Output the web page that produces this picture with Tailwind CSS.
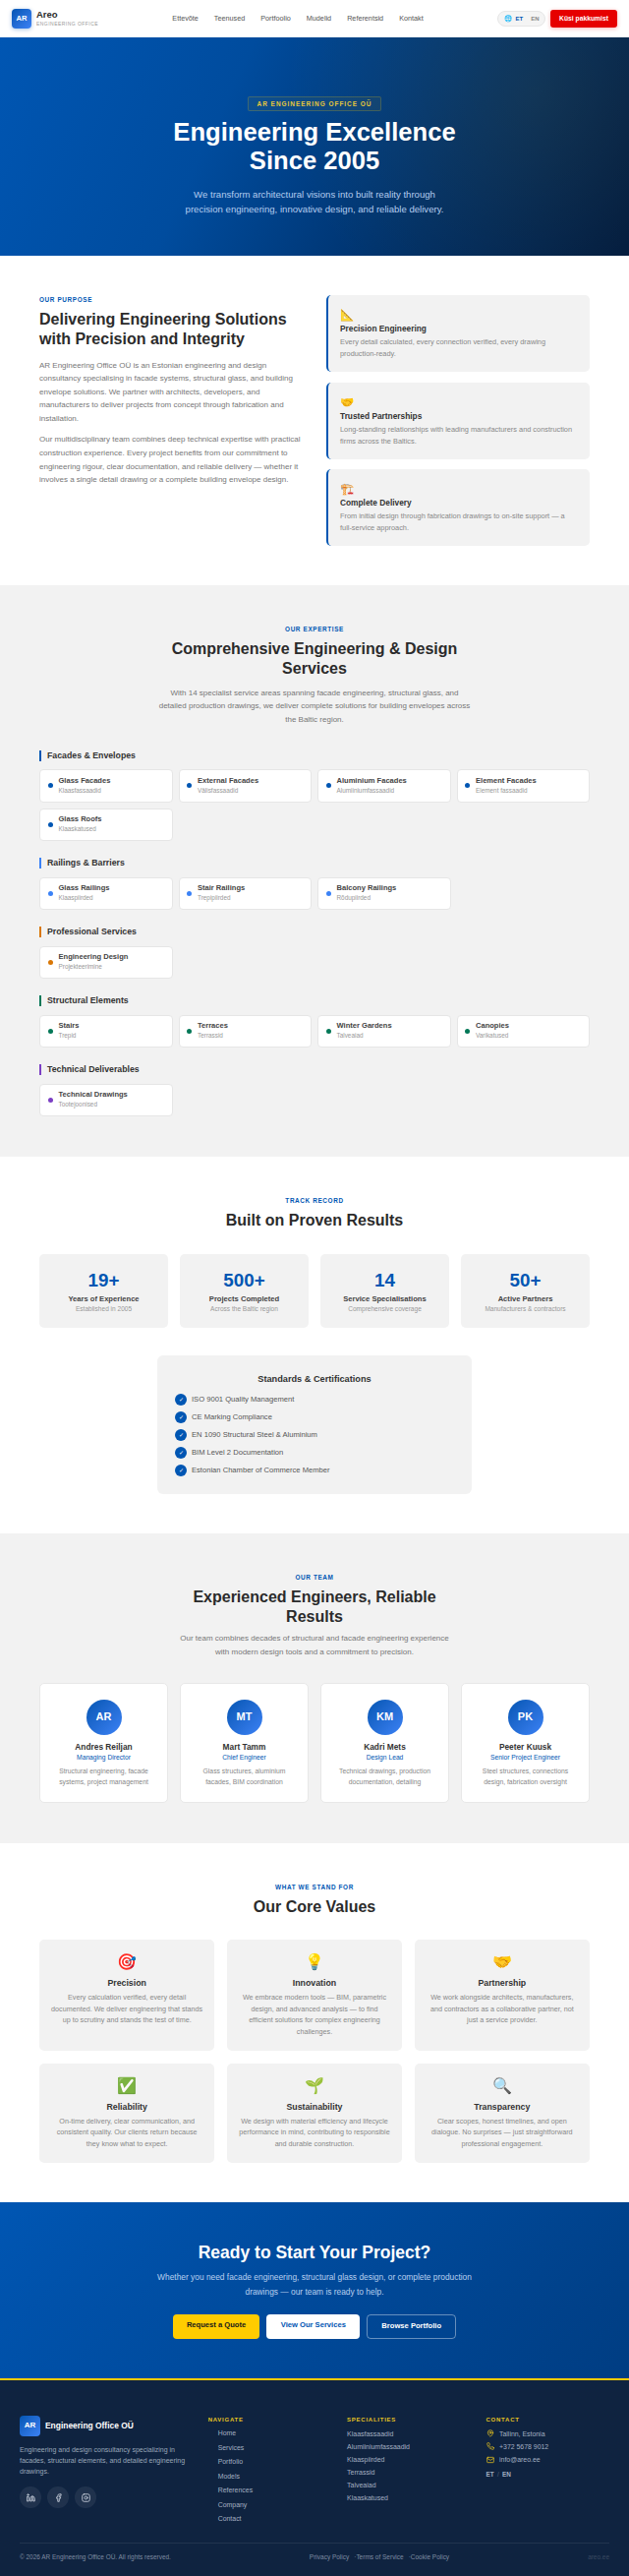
<!DOCTYPE html>
<html lang="en">
<head>
    <meta charset="UTF-8">
    <meta name="viewport" content="width=device-width, initial-scale=1.0">
    <title>AR Engineering Office OÜ</title>
    <script src="https://cdn.jsdelivr.net/npm/@tailwindcss/browser@4"></script>
</head>
<body class="font-['Liberation_Sans',sans-serif] bg-white text-[#2b2b2b] w-[640px]">

    <!-- Navbar -->
    <nav class="h-[38px] px-[12px] flex items-center justify-between bg-white">
        <div class="flex items-center gap-[5px]">
            <div class="w-[20px] h-[20px] rounded-[4px] bg-gradient-to-br from-[#0056b3] to-[#3b82f6] text-white text-[7.6px] font-bold flex items-center justify-center shadow-[0_1px_4px_rgba(0,86,179,.35)]">AR</div>
            <div>
                <p class="text-[9.5px] leading-[10px] font-semibold text-[#2b2b2b]">Areo</p>
                <p class="text-[5px] leading-[8px] tracking-[.46px] text-[#999]">ENGINEERING OFFICE</p>
            </div>
        </div>
        <div class="flex items-center gap-[16px] text-[7.24px] leading-[10px] text-[#555]">
            <a>Ettevõte</a>
            <a>Teenused</a>
            <a>Portfoolio</a>
            <a>Mudelid</a>
            <a>Referentsid</a>
            <a>Kontakt</a>
        </div>
        <div class="flex items-center gap-[5px]">
            <div class="w-[49px] h-[16px] rounded-full bg-[#f4f4f4] border border-[#e6e6e6] flex items-center pl-[6px] text-[6px] font-bold">
                <span class="text-[6.6px] leading-none">🌐</span>
                <span class="ml-[3.5px] text-[#0056b3]">ET</span>
                <span class="ml-[8px] text-[#888]">EN</span>
            </div>
            <a class="w-[68px] h-[17.5px] rounded-[3px] bg-[#e60000] text-white text-[6.74px] font-bold flex items-center justify-center shadow-[0_1px_4px_rgba(230,0,0,.3)]">Küsi pakkumist</a>
        </div>
    </nav>

    <!-- Hero -->
    <section class="h-[222px] pt-[60px] text-center bg-[radial-gradient(circle_at_85%_25%,rgba(255,204,0,.07),transparent_45%),linear-gradient(115deg,#0056b3_0%,#004c9e_35%,#002f66_70%,#001a3f_100%)]">
        <span class="block mx-auto h-[15px] w-[136px] leading-[13px] border border-[#ffcc00]/20 rounded-[2px] bg-[#ffcc00]/5 text-[#e6c73c] text-[6.44px] font-bold tracking-[1px]">AR ENGINEERING OFFICE OÜ</span>
        <h1 class="mt-[6.5px] text-[25.6px] leading-[29px] font-bold text-white">Engineering Excellence<br>Since 2005</h1>
        <p class="mt-[12px] text-[9.58px] leading-[15px] text-[#b5cdf0]">We transform architectural visions into built reality through<br>precision engineering, innovative design, and reliable delivery.</p>
    </section>

    <!-- Purpose -->
    <section class="h-[335px] px-[40px] pt-[40px] grid grid-cols-2 gap-[24px] items-start">
        <div>
            <p class="text-[6.4px] leading-[10px] font-bold tracking-[.62px] text-[#0056b3]">OUR PURPOSE</p>
            <h2 class="mt-[4.5px] text-[16px] leading-[20px] font-bold text-[#2b2b2b]">Delivering Engineering Solutions with Precision and Integrity</h2>
            <p class="mt-[10px] text-[8px] leading-[13.6px] text-[#777]">AR Engineering Office OÜ is an Estonian engineering and design consultancy specialising in facade systems, structural glass, and building envelope solutions. We partner with architects, developers, and manufacturers to deliver projects from concept through fabrication and installation.</p>
            <p class="mt-[8px] text-[8px] leading-[13.6px] text-[#777]">Our multidisciplinary team combines deep technical expertise with practical construction experience. Every project benefits from our commitment to engineering rigour, clear documentation, and reliable delivery — whether it involves a single detail drawing or a complete building envelope design.</p>
        </div>
        <div class="flex flex-col gap-[10.5px]">
            <div class="h-[78px] px-[12px] pt-[12px] bg-[#f2f2f2] border-l-2 border-[#0056b3] rounded-[5px]">
                <div class="text-[11.5px] leading-[16px]">📐</div>
                <h3 class="text-[8.33px] leading-[12px] font-bold text-[#333]">Precision Engineering</h3>
                <p class="mt-[2px] text-[7.36px] leading-[12px] text-[#888]">Every detail calculated, every connection verified, every drawing production-ready.</p>
            </div>
            <div class="h-[78px] px-[12px] pt-[12px] bg-[#f2f2f2] border-l-2 border-[#0056b3] rounded-[5px]">
                <div class="text-[11.5px] leading-[16px]">🤝</div>
                <h3 class="text-[8.33px] leading-[12px] font-bold text-[#333]">Trusted Partnerships</h3>
                <p class="mt-[2px] text-[7.36px] leading-[12px] text-[#888]">Long-standing relationships with leading manufacturers and construction firms across the Baltics.</p>
            </div>
            <div class="h-[78px] px-[12px] pt-[12px] bg-[#f2f2f2] border-l-2 border-[#0056b3] rounded-[5px]">
                <div class="text-[11.5px] leading-[16px]">🏗️</div>
                <h3 class="text-[8.33px] leading-[12px] font-bold text-[#333]">Complete Delivery</h3>
                <p class="mt-[2px] text-[7.36px] leading-[12px] text-[#888]">From initial design through fabrication drawings to on-site support — a full-service approach.</p>
            </div>
        </div>
    </section>

    <!-- Services -->
    <section class="h-[581px] px-[40px] pt-[40px] bg-[#f2f2f2]">
        <p class="text-center text-[6.4px] leading-[10px] font-bold tracking-[.62px] text-[#0056b3]">OUR EXPERTISE</p>
        <h2 class="mt-[5px] mx-auto w-[320px] text-center text-[16px] leading-[20px] font-bold text-[#2b2b2b]">Comprehensive Engineering &amp; Design Services</h2>
        <p class="mt-[7.5px] mx-auto w-[320px] text-center text-[8px] leading-[13.7px] text-[#777]">With 14 specialist service areas spanning facade engineering, structural glass, and detailed production drawings, we deliver complete solutions for building envelopes across the Baltic region.</p>

        <h3 class="mt-[24px] h-[11px] flex items-center border-l-2 border-[#0056b3] pl-[6px] text-[8.75px] font-semibold text-[#333]">Facades &amp; Envelopes</h3>
        <div class="mt-[8.5px] grid grid-cols-4 gap-[6px]">
            <div class="h-[33.5px] flex items-center gap-[6px] pl-[7.5px] bg-white border border-[#e6e6e6] rounded-[4px]">
                <span class="w-[5px] h-[5px] rounded-full bg-[#0056b3]"></span>
                <div><p class="text-[7.56px] leading-[10px] font-bold text-[#444]">Glass Facades</p><p class="text-[6.4px] leading-[10px] text-[#999]">Klaasfassaadid</p></div>
            </div>
            <div class="h-[33.5px] flex items-center gap-[6px] pl-[7.5px] bg-white border border-[#e6e6e6] rounded-[4px]">
                <span class="w-[5px] h-[5px] rounded-full bg-[#0056b3]"></span>
                <div><p class="text-[7.56px] leading-[10px] font-bold text-[#444]">External Facades</p><p class="text-[6.4px] leading-[10px] text-[#999]">Välisfassaadid</p></div>
            </div>
            <div class="h-[33.5px] flex items-center gap-[6px] pl-[7.5px] bg-white border border-[#e6e6e6] rounded-[4px]">
                <span class="w-[5px] h-[5px] rounded-full bg-[#0056b3]"></span>
                <div><p class="text-[7.56px] leading-[10px] font-bold text-[#444]">Aluminium Facades</p><p class="text-[6.4px] leading-[10px] text-[#999]">Alumiiniumfassaadid</p></div>
            </div>
            <div class="h-[33.5px] flex items-center gap-[6px] pl-[7.5px] bg-white border border-[#e6e6e6] rounded-[4px]">
                <span class="w-[5px] h-[5px] rounded-full bg-[#0056b3]"></span>
                <div><p class="text-[7.56px] leading-[10px] font-bold text-[#444]">Element Facades</p><p class="text-[6.4px] leading-[10px] text-[#999]">Element fassaadid</p></div>
            </div>
            <div class="h-[33.5px] flex items-center gap-[6px] pl-[7.5px] bg-white border border-[#e6e6e6] rounded-[4px]">
                <span class="w-[5px] h-[5px] rounded-full bg-[#0056b3]"></span>
                <div><p class="text-[7.56px] leading-[10px] font-bold text-[#444]">Glass Roofs</p><p class="text-[6.4px] leading-[10px] text-[#999]">Klaaskatused</p></div>
            </div>
        </div>

        <h3 class="mt-[17px] h-[11px] flex items-center border-l-2 border-[#3b82f6] pl-[6px] text-[8.75px] font-semibold text-[#333]">Railings &amp; Barriers</h3>
        <div class="mt-[8.5px] grid grid-cols-4 gap-[6px]">
            <div class="h-[33.5px] flex items-center gap-[6px] pl-[7.5px] bg-white border border-[#e6e6e6] rounded-[4px]">
                <span class="w-[5px] h-[5px] rounded-full bg-[#3b82f6]"></span>
                <div><p class="text-[7.56px] leading-[10px] font-bold text-[#444]">Glass Railings</p><p class="text-[6.4px] leading-[10px] text-[#999]">Klaaspiirded</p></div>
            </div>
            <div class="h-[33.5px] flex items-center gap-[6px] pl-[7.5px] bg-white border border-[#e6e6e6] rounded-[4px]">
                <span class="w-[5px] h-[5px] rounded-full bg-[#3b82f6]"></span>
                <div><p class="text-[7.56px] leading-[10px] font-bold text-[#444]">Stair Railings</p><p class="text-[6.4px] leading-[10px] text-[#999]">Trepipiirded</p></div>
            </div>
            <div class="h-[33.5px] flex items-center gap-[6px] pl-[7.5px] bg-white border border-[#e6e6e6] rounded-[4px]">
                <span class="w-[5px] h-[5px] rounded-full bg-[#3b82f6]"></span>
                <div><p class="text-[7.56px] leading-[10px] font-bold text-[#444]">Balcony Railings</p><p class="text-[6.4px] leading-[10px] text-[#999]">Rõdupiirded</p></div>
            </div>
        </div>

        <h3 class="mt-[17px] h-[11px] flex items-center border-l-2 border-[#d97706] pl-[6px] text-[8.75px] font-semibold text-[#333]">Professional Services</h3>
        <div class="mt-[8.5px] grid grid-cols-4 gap-[6px]">
            <div class="h-[33.5px] flex items-center gap-[6px] pl-[7.5px] bg-white border border-[#e6e6e6] rounded-[4px]">
                <span class="w-[5px] h-[5px] rounded-full bg-[#d97706]"></span>
                <div><p class="text-[7.56px] leading-[10px] font-bold text-[#444]">Engineering Design</p><p class="text-[6.4px] leading-[10px] text-[#999]">Projekteerimine</p></div>
            </div>
        </div>

        <h3 class="mt-[17px] h-[11px] flex items-center border-l-2 border-[#047857] pl-[6px] text-[8.75px] font-semibold text-[#333]">Structural Elements</h3>
        <div class="mt-[8.5px] grid grid-cols-4 gap-[6px]">
            <div class="h-[33.5px] flex items-center gap-[6px] pl-[7.5px] bg-white border border-[#e6e6e6] rounded-[4px]">
                <span class="w-[5px] h-[5px] rounded-full bg-[#047857]"></span>
                <div><p class="text-[7.56px] leading-[10px] font-bold text-[#444]">Stairs</p><p class="text-[6.4px] leading-[10px] text-[#999]">Trepid</p></div>
            </div>
            <div class="h-[33.5px] flex items-center gap-[6px] pl-[7.5px] bg-white border border-[#e6e6e6] rounded-[4px]">
                <span class="w-[5px] h-[5px] rounded-full bg-[#047857]"></span>
                <div><p class="text-[7.56px] leading-[10px] font-bold text-[#444]">Terraces</p><p class="text-[6.4px] leading-[10px] text-[#999]">Terrassid</p></div>
            </div>
            <div class="h-[33.5px] flex items-center gap-[6px] pl-[7.5px] bg-white border border-[#e6e6e6] rounded-[4px]">
                <span class="w-[5px] h-[5px] rounded-full bg-[#047857]"></span>
                <div><p class="text-[7.56px] leading-[10px] font-bold text-[#444]">Winter Gardens</p><p class="text-[6.4px] leading-[10px] text-[#999]">Talveaiad</p></div>
            </div>
            <div class="h-[33.5px] flex items-center gap-[6px] pl-[7.5px] bg-white border border-[#e6e6e6] rounded-[4px]">
                <span class="w-[5px] h-[5px] rounded-full bg-[#047857]"></span>
                <div><p class="text-[7.56px] leading-[10px] font-bold text-[#444]">Canopies</p><p class="text-[6.4px] leading-[10px] text-[#999]">Varikatused</p></div>
            </div>
        </div>

        <h3 class="mt-[17px] h-[11px] flex items-center border-l-2 border-[#7c3fc4] pl-[6px] text-[8.75px] font-semibold text-[#333]">Technical Deliverables</h3>
        <div class="mt-[8.5px] grid grid-cols-4 gap-[6px]">
            <div class="h-[33.5px] flex items-center gap-[6px] pl-[7.5px] bg-white border border-[#e6e6e6] rounded-[4px]">
                <span class="w-[5px] h-[5px] rounded-full bg-[#7c3fc4]"></span>
                <div><p class="text-[7.56px] leading-[10px] font-bold text-[#444]">Technical Drawings</p><p class="text-[6.4px] leading-[10px] text-[#999]">Tootejoonised</p></div>
            </div>
        </div>
    </section>

    <!-- Track record -->
    <section class="h-[383px] px-[40px] pt-[40px]">
        <p class="text-center text-[6.4px] leading-[10px] font-bold tracking-[.62px] text-[#0056b3]">TRACK RECORD</p>
        <h2 class="mt-[5px] text-center text-[16px] leading-[20px] font-bold text-[#2b2b2b]">Built on Proven Results</h2>
        <div class="mt-[24px] grid grid-cols-4 gap-[12px] text-center">
            <div class="h-[75px] pt-[14.5px] bg-[#f2f2f2] rounded-[5px]">
                <p class="text-[18.8px] leading-[23px] font-bold text-[#0056b3]">19+</p>
                <p class="mt-[3px] text-[7.6px] leading-[10px] font-bold text-[#444]">Years of Experience</p>
                <p class="text-[6.56px] leading-[10px] text-[#999]">Established in 2005</p>
            </div>
            <div class="h-[75px] pt-[14.5px] bg-[#f2f2f2] rounded-[5px]">
                <p class="text-[18.8px] leading-[23px] font-bold text-[#0056b3]">500+</p>
                <p class="mt-[3px] text-[7.6px] leading-[10px] font-bold text-[#444]">Projects Completed</p>
                <p class="text-[6.56px] leading-[10px] text-[#999]">Across the Baltic region</p>
            </div>
            <div class="h-[75px] pt-[14.5px] bg-[#f2f2f2] rounded-[5px]">
                <p class="text-[18.8px] leading-[23px] font-bold text-[#0056b3]">14</p>
                <p class="mt-[3px] text-[7.6px] leading-[10px] font-bold text-[#444]">Service Specialisations</p>
                <p class="text-[6.56px] leading-[10px] text-[#999]">Comprehensive coverage</p>
            </div>
            <div class="h-[75px] pt-[14.5px] bg-[#f2f2f2] rounded-[5px]">
                <p class="text-[18.8px] leading-[23px] font-bold text-[#0056b3]">50+</p>
                <p class="mt-[3px] text-[7.6px] leading-[10px] font-bold text-[#444]">Active Partners</p>
                <p class="text-[6.56px] leading-[10px] text-[#999]">Manufacturers &amp; contractors</p>
            </div>
        </div>
        <div class="mt-[27.5px] mx-auto w-[320px] h-[141.5px] px-[18px] pt-[18px] bg-[#f2f2f2] rounded-[6px]">
            <h3 class="text-center text-[9.2px] leading-[12px] font-bold text-[#333]">Standards &amp; Certifications</h3>
            <ul class="mt-[9.5px] flex flex-col gap-[6px] text-[7.6px] leading-[12px] text-[#555]">
                <li class="flex items-center gap-[5px]"><span class="w-[12px] h-[12px] rounded-full bg-[#0056b3] text-white text-[5.5px] flex items-center justify-center">✓</span>ISO 9001 Quality Management</li>
                <li class="flex items-center gap-[5px]"><span class="w-[12px] h-[12px] rounded-full bg-[#0056b3] text-white text-[5.5px] flex items-center justify-center">✓</span>CE Marking Compliance</li>
                <li class="flex items-center gap-[5px]"><span class="w-[12px] h-[12px] rounded-full bg-[#0056b3] text-white text-[5.5px] flex items-center justify-center">✓</span>EN 1090 Structural Steel &amp; Aluminium</li>
                <li class="flex items-center gap-[5px]"><span class="w-[12px] h-[12px] rounded-full bg-[#0056b3] text-white text-[5.5px] flex items-center justify-center">✓</span>BIM Level 2 Documentation</li>
                <li class="flex items-center gap-[5px]"><span class="w-[12px] h-[12px] rounded-full bg-[#0056b3] text-white text-[5.5px] flex items-center justify-center">✓</span>Estonian Chamber of Commerce Member</li>
            </ul>
        </div>
    </section>

    <!-- Team -->
    <section class="h-[314.5px] px-[40px] pt-[40px] bg-[#f2f2f2]">
        <p class="text-center text-[6.4px] leading-[10px] font-bold tracking-[.62px] text-[#0056b3]">OUR TEAM</p>
        <h2 class="mt-[4.7px] text-center text-[16px] leading-[20px] font-bold text-[#2b2b2b]">Experienced Engineers, Reliable<br>Results</h2>
        <p class="mt-[5.7px] text-center text-[8px] leading-[13.6px] text-[#777]">Our team combines decades of structural and facade engineering experience<br>with modern design tools and a commitment to precision.</p>
        <div class="mt-[24px] grid grid-cols-4 gap-[12px] text-center">
            <div class="h-[122px] pt-[16px] bg-white border border-[#e8e8e8] rounded-[5px]">
                <div class="mx-auto w-[36px] h-[36px] rounded-full bg-gradient-to-br from-[#0056b3] to-[#3b82f6] text-white text-[11px] font-bold flex items-center justify-center">AR</div>
                <p class="mt-[6.5px] text-[8.34px] leading-[12px] font-semibold text-[#333]">Andres Reiljan</p>
                <p class="text-[6.72px] leading-[10px] text-[#0056b3]">Managing Director</p>
                <p class="mt-[4px] text-[6.8px] leading-[10.7px] text-[#888]">Structural engineering, facade<br>systems, project management</p>
            </div>
            <div class="h-[122px] pt-[16px] bg-white border border-[#e8e8e8] rounded-[5px]">
                <div class="mx-auto w-[36px] h-[36px] rounded-full bg-gradient-to-br from-[#0056b3] to-[#3b82f6] text-white text-[11px] font-bold flex items-center justify-center">MT</div>
                <p class="mt-[6.5px] text-[8.34px] leading-[12px] font-semibold text-[#333]">Mart Tamm</p>
                <p class="text-[6.72px] leading-[10px] text-[#0056b3]">Chief Engineer</p>
                <p class="mt-[4px] text-[6.8px] leading-[10.7px] text-[#888]">Glass structures, aluminium<br>facades, BIM coordination</p>
            </div>
            <div class="h-[122px] pt-[16px] bg-white border border-[#e8e8e8] rounded-[5px]">
                <div class="mx-auto w-[36px] h-[36px] rounded-full bg-gradient-to-br from-[#0056b3] to-[#3b82f6] text-white text-[11px] font-bold flex items-center justify-center">KM</div>
                <p class="mt-[6.5px] text-[8.34px] leading-[12px] font-semibold text-[#333]">Kadri Mets</p>
                <p class="text-[6.72px] leading-[10px] text-[#0056b3]">Design Lead</p>
                <p class="mt-[4px] text-[6.8px] leading-[10.7px] text-[#888]">Technical drawings, production<br>documentation, detailing</p>
            </div>
            <div class="h-[122px] pt-[16px] bg-white border border-[#e8e8e8] rounded-[5px]">
                <div class="mx-auto w-[36px] h-[36px] rounded-full bg-gradient-to-br from-[#0056b3] to-[#3b82f6] text-white text-[11px] font-bold flex items-center justify-center">PK</div>
                <p class="mt-[6.5px] text-[8.34px] leading-[12px] font-semibold text-[#333]">Peeter Kuusk</p>
                <p class="text-[6.72px] leading-[10px] text-[#0056b3]">Senior Project Engineer</p>
                <p class="mt-[4px] text-[6.8px] leading-[10.7px] text-[#888]">Steel structures, connections<br>design, fabrication oversight</p>
            </div>
        </div>
    </section>

    <!-- Values -->
    <section class="h-[365.8px] px-[40px] pt-[40px]">
        <p class="text-center text-[6.4px] leading-[10px] font-bold tracking-[.62px] text-[#0056b3]">WHAT WE STAND FOR</p>
        <h2 class="mt-[5px] text-center text-[16px] leading-[20px] font-bold text-[#2b2b2b]">Our Core Values</h2>
        <div class="mt-[23.7px] grid grid-cols-3 gap-[12.5px] text-center">
            <div class="px-[11.5px] pt-[12px] pb-[13.7px] bg-[#f2f2f2] rounded-[5px]">
                <div class="h-[22px] text-[16px] leading-[22px]">🎯</div>
                <h3 class="mt-[4px] text-[8.77px] leading-[12px] font-bold text-[#333]">Precision</h3>
                <p class="mt-[3.2px] text-[7.2px] leading-[11.5px] text-[#888]">Every calculation verified, every detail documented. We deliver engineering that stands up to scrutiny and stands the test of time.</p>
            </div>
            <div class="px-[11.5px] pt-[12px] pb-[13.7px] bg-[#f2f2f2] rounded-[5px]">
                <div class="h-[22px] text-[16px] leading-[22px]">💡</div>
                <h3 class="mt-[4px] text-[8.77px] leading-[12px] font-bold text-[#333]">Innovation</h3>
                <p class="mt-[3.2px] text-[7.2px] leading-[11.5px] text-[#888]">We embrace modern tools — BIM, parametric design, and advanced analysis — to find efficient solutions for complex engineering challenges.</p>
            </div>
            <div class="px-[11.5px] pt-[12px] pb-[13.7px] bg-[#f2f2f2] rounded-[5px]">
                <div class="h-[22px] text-[16px] leading-[22px]">🤝</div>
                <h3 class="mt-[4px] text-[8.77px] leading-[12px] font-bold text-[#333]">Partnership</h3>
                <p class="mt-[3.2px] text-[7.2px] leading-[11.5px] text-[#888]">We work alongside architects, manufacturers, and contractors as a collaborative partner, not just a service provider.</p>
            </div>
            <div class="px-[11.5px] pt-[12px] pb-[13.7px] bg-[#f2f2f2] rounded-[5px]">
                <div class="h-[22px] text-[16px] leading-[22px]">✅</div>
                <h3 class="mt-[4px] text-[8.77px] leading-[12px] font-bold text-[#333]">Reliability</h3>
                <p class="mt-[3.2px] text-[7.2px] leading-[11.5px] text-[#888]">On-time delivery, clear communication, and consistent quality. Our clients return because they know what to expect.</p>
            </div>
            <div class="px-[11.5px] pt-[12px] pb-[13.7px] bg-[#f2f2f2] rounded-[5px]">
                <div class="h-[22px] text-[16px] leading-[22px]">🌱</div>
                <h3 class="mt-[4px] text-[8.77px] leading-[12px] font-bold text-[#333]">Sustainability</h3>
                <p class="mt-[3.2px] text-[7.2px] leading-[11.5px] text-[#888]">We design with material efficiency and lifecycle performance in mind, contributing to responsible and durable construction.</p>
            </div>
            <div class="px-[11.5px] pt-[12px] pb-[13.7px] bg-[#f2f2f2] rounded-[5px]">
                <div class="h-[22px] text-[16px] leading-[22px]">🔍</div>
                <h3 class="mt-[4px] text-[8.77px] leading-[12px] font-bold text-[#333]">Transparency</h3>
                <p class="mt-[3.2px] text-[7.2px] leading-[11.5px] text-[#888]">Clear scopes, honest timelines, and open dialogue. No surprises — just straightforward professional engagement.</p>
            </div>
        </div>
    </section>

    <!-- CTA -->
    <section class="h-[178.7px] pt-[40px] text-center bg-[linear-gradient(135deg,#0056b3,#003d82)]">
        <h2 class="text-[17.5px] leading-[22px] font-bold text-white">Ready to Start Your Project?</h2>
        <p class="mt-[6.7px] text-[8.38px] leading-[14.6px] text-[#b9d0ef]">Whether you need facade engineering, structural glass design, or complete production<br>drawings — our team is ready to help.</p>
        <div class="mt-[15.8px] flex justify-center gap-[7px] text-[7.6px] leading-[10px] font-bold">
            <a class="px-[14px] py-[6.5px] rounded-[4px] bg-[#ffcc00] text-[#1a1a1a]">Request a Quote</a>
            <a class="px-[14.5px] py-[6.5px] rounded-[4px] bg-white text-[#0056b3]">View Our Services</a>
            <a class="px-[14px] py-[6.5px] rounded-[4px] border border-white/40 text-white">Browse Portfolio</a>
        </div>
    </section>

    <!-- Footer -->
    <footer class="h-[201px] px-[20px] pt-[36px] border-t-2 border-[#ffcc00] bg-[#0f2340]">
        <div class="h-[113px] grid grid-cols-[1.4fr_1fr_1fr_1fr] gap-[16px]">
            <div>
                <div class="flex items-center gap-[5px]">
                    <div class="w-[21px] h-[21px] rounded-[4px] bg-gradient-to-br from-[#0056b3] to-[#3b82f6] text-white text-[8px] font-bold flex items-center justify-center">AR</div>
                    <span class="text-[8.44px] font-bold text-white">Engineering Office OÜ</span>
                </div>
                <p class="mt-[8px] text-[7px] leading-[11px] text-[#9aa7b9]">Engineering and design consultancy specializing in facades, structural elements, and detailed engineering drawings.</p>
                <div class="mt-[10.5px] flex gap-[6px]">
                    <a class="w-[22px] h-[22px] rounded-full bg-white/7 flex items-center justify-center">
                        <svg class="w-[9px] h-[9px]" viewBox="0 0 24 24" fill="none" stroke="#c4ccd8" stroke-width="2.4" stroke-linecap="round" stroke-linejoin="round"><path d="M16 8a6 6 0 0 1 6 6v7h-4v-7a2 2 0 0 0-2-2 2 2 0 0 0-2 2v7h-4v-7a6 6 0 0 1 6-6z"/><rect x="2" y="9" width="4" height="12"/><circle cx="4" cy="4" r="2"/></svg>
                    </a>
                    <a class="w-[22px] h-[22px] rounded-full bg-white/7 flex items-center justify-center">
                        <svg class="w-[9px] h-[9px]" viewBox="0 0 24 24" fill="none" stroke="#c4ccd8" stroke-width="2.4" stroke-linecap="round" stroke-linejoin="round"><path d="M18 2h-3a5 5 0 0 0-5 5v3H7v4h3v8h4v-8h3l1-4h-4V7a1 1 0 0 1 1-1h3z"/></svg>
                    </a>
                    <a class="w-[22px] h-[22px] rounded-full bg-white/7 flex items-center justify-center">
                        <svg class="w-[9px] h-[9px]" viewBox="0 0 24 24" fill="none" stroke="#c4ccd8" stroke-width="2.4" stroke-linecap="round" stroke-linejoin="round"><rect x="2" y="2" width="20" height="20" rx="5"/><path d="M16 11.37A4 4 0 1 1 12.63 8 4 4 0 0 1 16 11.37z"/></svg>
                    </a>
                </div>
            </div>
            <div>
                <p class="text-[6px] leading-[8px] font-bold tracking-[.75px] text-[#e6c220]">NAVIGATE</p>
                <ul class="mt-[3px] pl-[10px] text-[6.95px] leading-[14.55px] text-[#a3afc0]">
                    <li>Home</li>
                    <li>Services</li>
                    <li>Portfolio</li>
                    <li>Models</li>
                    <li>References</li>
                    <li>Company</li>
                    <li>Contact</li>
                </ul>
            </div>
            <div>
                <p class="text-[6px] leading-[8px] font-bold tracking-[.75px] text-[#e6c220]">SPECIALITIES</p>
                <ul class="mt-[3.8px] text-[6.98px] leading-[13px] text-[#a3afc0]">
                    <li>Klaasfassaadid</li>
                    <li>Alumiiniumfassaadid</li>
                    <li>Klaaspiirded</li>
                    <li>Terrassid</li>
                    <li>Talveaiad</li>
                    <li>Klaaskatused</li>
                </ul>
            </div>
            <div>
                <p class="text-[6px] leading-[8px] font-bold tracking-[.75px] text-[#e6c220]">CONTACT</p>
                <ul class="mt-[3.8px] text-[6.92px] leading-[13.1px] text-[#a3afc0]">
                    <li class="flex items-center gap-[5.5px]">
                        <svg class="w-[8px] h-[8px]" viewBox="0 0 24 24" fill="none" stroke="#e6c220" stroke-width="2.2" stroke-linecap="round" stroke-linejoin="round"><path d="M20 10c0 6-8 12-8 12s-8-6-8-12a8 8 0 0 1 16 0z"/><circle cx="12" cy="10" r="3"/></svg>
                        Tallinn, Estonia
                    </li>
                    <li class="flex items-center gap-[5.5px]">
                        <svg class="w-[8px] h-[8px]" viewBox="0 0 24 24" fill="none" stroke="#e6c220" stroke-width="2.2" stroke-linecap="round" stroke-linejoin="round"><path d="M22 16.92v3a2 2 0 0 1-2.18 2 19.8 19.8 0 0 1-8.63-3.07 19.5 19.5 0 0 1-6-6 19.8 19.8 0 0 1-3.07-8.67A2 2 0 0 1 4.11 2h3a2 2 0 0 1 2 1.72c.13.96.36 1.9.7 2.81a2 2 0 0 1-.45 2.11L8.09 9.91a16 16 0 0 0 6 6l1.27-1.27a2 2 0 0 1 2.11-.45c.91.34 1.85.57 2.81.7A2 2 0 0 1 22 16.92z"/></svg>
                        +372 5678 9012
                    </li>
                    <li class="flex items-center gap-[5.5px]">
                        <svg class="w-[8px] h-[8px]" viewBox="0 0 24 24" fill="none" stroke="#e6c220" stroke-width="2.2" stroke-linecap="round" stroke-linejoin="round"><rect x="2" y="4" width="20" height="16" rx="2"/><path d="M22 7l-10 6L2 7"/></svg>
                        info@areo.ee
                    </li>
                </ul>
                <p class="mt-[3.5px] text-[6.4px] leading-[10px] font-bold text-[#a3afc0]">ET <span class="mx-[1.5px] font-normal text-[#55637a]">/</span> EN</p>
            </div>
        </div>
        <div class="mt-[16.3px] pt-[9px] border-t border-white/8 flex justify-between text-[6.44px] leading-[10px] text-[#7f8ca0]">
            <span>© 2026 AR Engineering Office OÜ. All rights reserved.</span>
            <span class="flex gap-[5px] text-[6.49px]"><a>Privacy Policy</a><a>·Terms of Service</a><a>·Cookie Policy</a></span>
            <span class="text-[#3a4a60]">areo.ee</span>
        </div>
    </footer>

</body>
</html>
